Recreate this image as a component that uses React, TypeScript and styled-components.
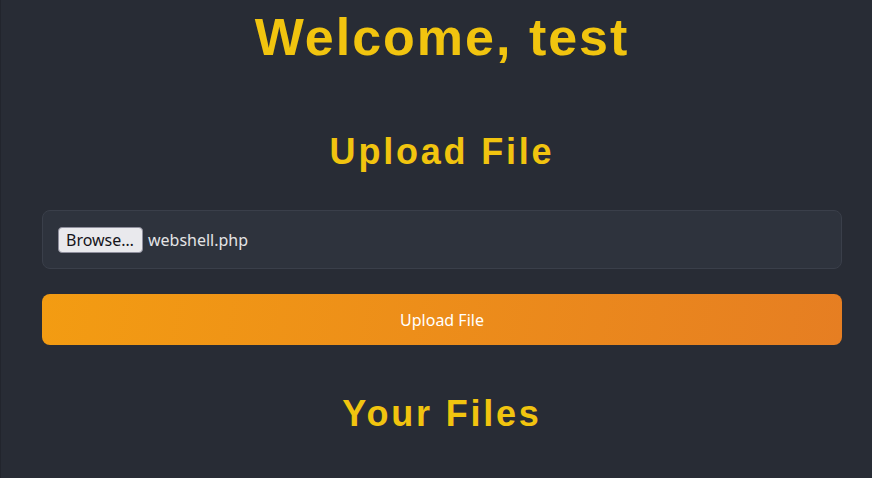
import styled, { createGlobalStyle } from "styled-components";

const GlobalStyle = createGlobalStyle`
  html, body {
    margin: 0;
    padding: 0;
    background: #282c35;
  }
  body {
    font-family: "Noto Sans", "Open Sans", sans-serif;
    color: #e6e6e6;
  }
`;

const Page = styled.main`
  min-height: 478px;
  box-sizing: border-box;
  border-left: 1px solid #22252d;
  padding: 0 0 0 11px;
`;

const Container = styled.div`
  max-width: 800px;
  margin: 0 auto;
  display: flex;
  flex-direction: column;
`;

const Title = styled.h1<{ $size: number; $spacing: number; $top: number }>`
  font-family: "Liberation Sans", Arial, sans-serif;
  font-weight: 700;
  font-size: ${(p) => p.$size}px;
  letter-spacing: ${(p) => p.$spacing}px;
  color: #f1c40f;
  text-align: center;
  line-height: 1.15;
  margin: ${(p) => p.$top}px 0 0;
`;

const UploadForm = styled.form`
  display: flex;
  flex-direction: column;
  gap: 25px;
  margin-top: 38px;
`;

const FileBox = styled.label`
  display: flex;
  align-items: center;
  gap: 5px;
  height: 59px;
  box-sizing: border-box;
  padding: 0 15px;
  background: #2e333d;
  border: 1px solid #3a3f4a;
  border-radius: 8px;
`;

const Browse = styled.span`
  display: inline-flex;
  align-items: center;
  height: 26px;
  box-sizing: border-box;
  padding: 0 8px 0 7px;
  background: #e9e9ed;
  border: 1px solid #8f8f9d;
  border-radius: 4px;
  color: #15141a;
  font-size: 16px;
`;

const FileName = styled.span`
  font-size: 16px;
  color: #e4e4e6;
`;

const SubmitButton = styled.button`
  height: 51px;
  border: none;
  border-radius: 8px;
  background: linear-gradient(100deg, #f39c12 0%, #e67e22 100%);
  color: #fff;
  font-family: "Noto Sans", "Open Sans", sans-serif;
  font-size: 16px;
  cursor: pointer;
`;

export default function App() {
  return (
    <>
      <GlobalStyle />
      <Page>
        <Container>
          <Title $size={52} $spacing={2} $top={8}>
            Welcome, test
          </Title>
          <Title as="h2" $size={36} $spacing={2.8} $top={63}>
            Upload File
          </Title>
          <UploadForm onSubmit={(e) => e.preventDefault()}>
            <FileBox>
              <Browse>Browse…</Browse>
              <FileName>webshell.php</FileName>
            </FileBox>
            <SubmitButton type="submit">Upload File</SubmitButton>
          </UploadForm>
          <Title as="h2" $size={36} $spacing={2.8} $top={48}>
            Your Files
          </Title>
        </Container>
      </Page>
    </>
  );
}
